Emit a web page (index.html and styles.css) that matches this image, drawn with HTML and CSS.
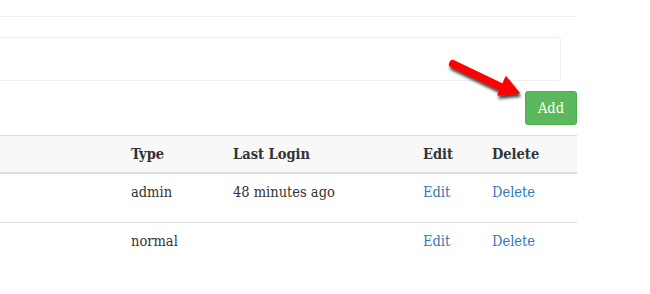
FILE: index.html
```html
<!DOCTYPE html>
<html lang="en">
<head>
    <meta charset="UTF-8">
    <title>Users</title>
    <link rel="stylesheet" href="styles.css">
</head>
<body>
    <div class="page">
        <div class="rule"></div>
        <div class="panel"></div>
        <div class="toolbar">
            <button type="button" class="btn-add">Add</button>
        </div>
        <table class="users">
            <thead>
                <tr>
                    <th class="col-name">Name</th>
                    <th class="col-type">Type</th>
                    <th class="col-login">Last Login</th>
                    <th class="col-edit">Edit</th>
                    <th class="col-delete">Delete</th>
                </tr>
            </thead>
            <tbody>
                <tr>
                    <td>admin@site.com</td>
                    <td>admin</td>
                    <td>48 minutes ago</td>
                    <td><a href="#">Edit</a></td>
                    <td><a href="#">Delete</a></td>
                </tr>
                <tr>
                    <td>admin@site.con</td>
                    <td>normal</td>
                    <td></td>
                    <td><a href="#">Edit</a></td>
                    <td><a href="#">Delete</a></td>
                </tr>
            </tbody>
        </table>

        <!-- pointer drawn over the toolbar -->
        <svg class="pointer" width="90" height="60" viewBox="0 0 90 60">
            <defs>
                <filter id="shade" x="-30%" y="-30%" width="160%" height="160%">
                    <feDropShadow dx="1" dy="3" stdDeviation="1.6" flood-color="#000" flood-opacity="0.75"/>
                </filter>
            </defs>
            <g filter="url(#shade)">
                <line x1="13" y1="14" x2="61" y2="37" stroke="#f00" stroke-width="8" stroke-linecap="round"/>
                <polygon points="79,43 58,45 66,27" fill="#f00" stroke="#f00" stroke-width="1.5" stroke-linejoin="round"/>
            </g>
        </svg>
    </div>
</body>
</html>
```

FILE: styles.css
```css
body {
    margin: 0;
    background: #fff;
    color: #333;
    font-family: "DejaVu Serif Condensed", "DejaVu Serif", serif;
    font-size: 14.5px;
    line-height: 20px;
    overflow: hidden;
}

.page {
    position: relative;
    width: 792px;
    margin-left: -215px;
    padding-top: 16px;
}

.rule { border-top: 1px solid #eee; }

.panel {
    margin: 20px 16px 0 0;
    height: 42px;
    border: 1px solid #eee;
    border-radius: 3px;
}

.toolbar {
    display: flex;
    justify-content: flex-end;
    margin-top: 10px;
}

.btn-add {
    height: 34px;
    padding: 0 12px;
    border: 1px solid #4cae4c;
    border-radius: 3px;
    background: #5cb85c;
    color: #fff;
    font: inherit;
}

.users {
    width: 100%;
    margin-top: 10px;
    border-collapse: collapse;
}

.users th, .users td {
    text-align: left;
    vertical-align: top;
    padding: 8px;
}

.users thead th {
    background: #f8f8f8;
    border-top: 1px solid #ddd;
    border-bottom: 2px solid #ddd;
    font-weight: bold;
}

.users td { padding-bottom: 20px; }
.users tbody tr + tr td { border-top: 1px solid #ddd; }

.col-name { width: 322px; }
.col-type { width: 86px; }
.col-login { width: 174px; }
.col-edit { width: 53px; }

.users a { color: #337ab7; text-decoration: none; }

.pointer {
    position: absolute;
    left: 655px;
    top: 50px;
}
```
